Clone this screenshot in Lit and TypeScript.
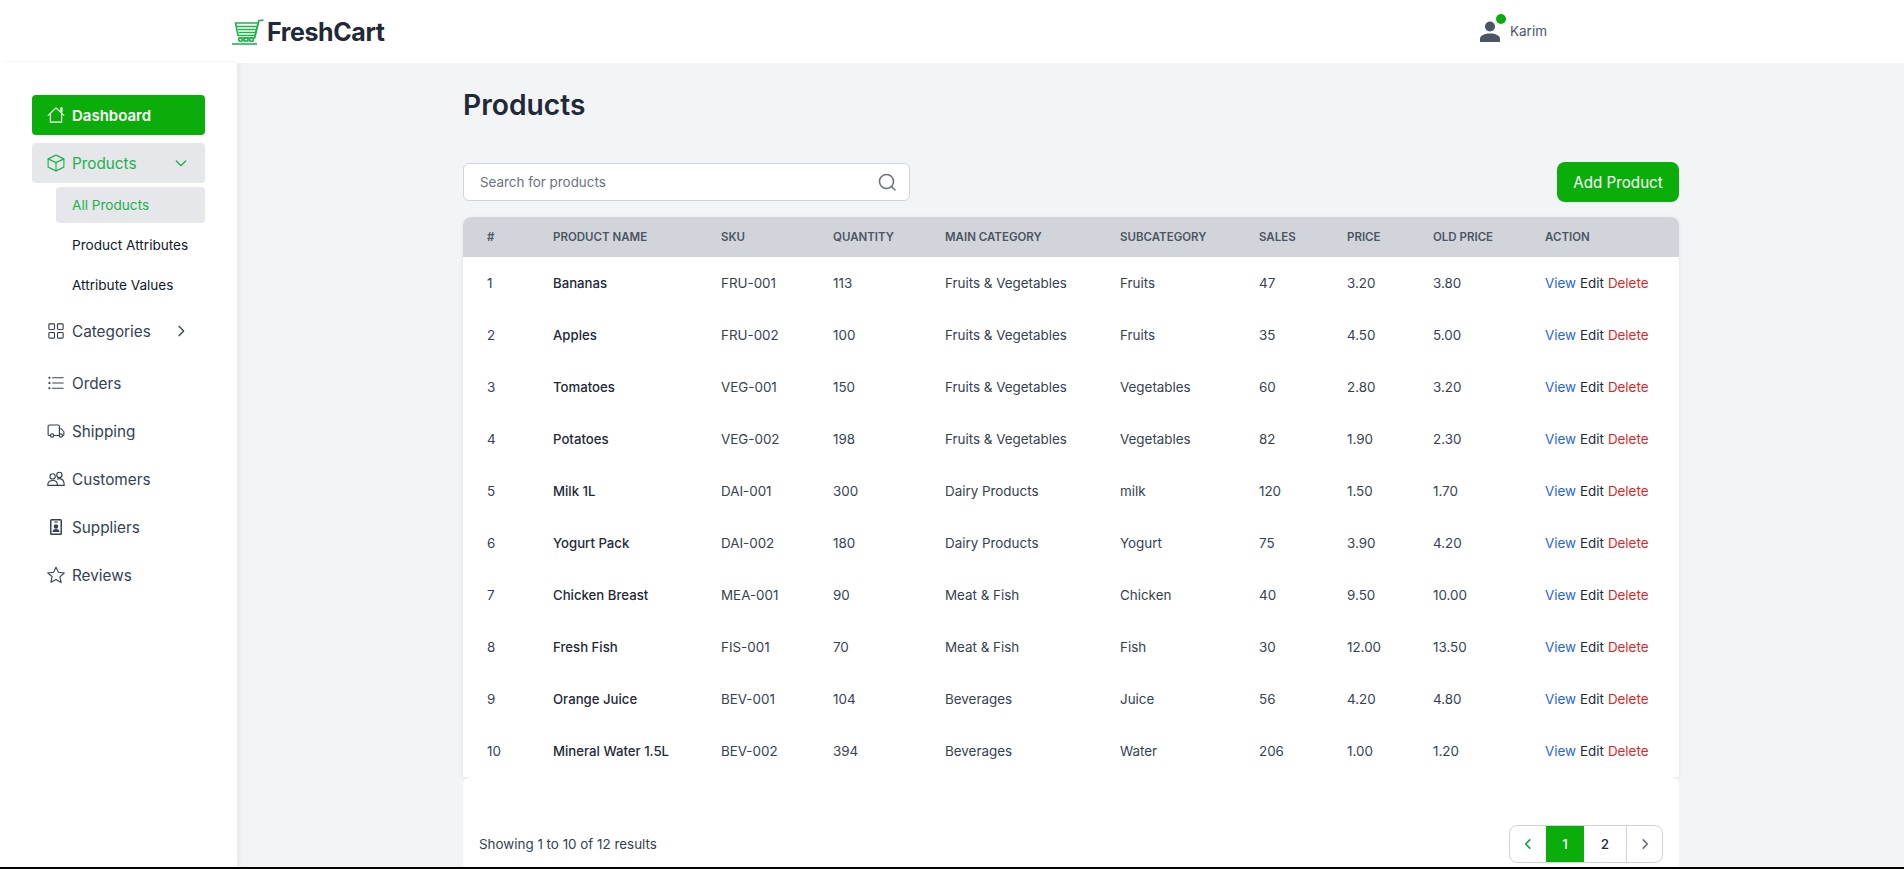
import { LitElement, html, css, svg } from 'lit';
import { customElement } from 'lit/decorators.js';

type Product = [string, string, number, string, string, number, string, string];

const PRODUCTS: Product[] = [
  ['Bananas', 'FRU-001', 113, 'Fruits & Vegetables', 'Fruits', 47, '3.20', '3.80'],
  ['Apples', 'FRU-002', 100, 'Fruits & Vegetables', 'Fruits', 35, '4.50', '5.00'],
  ['Tomatoes', 'VEG-001', 150, 'Fruits & Vegetables', 'Vegetables', 60, '2.80', '3.20'],
  ['Potatoes', 'VEG-002', 198, 'Fruits & Vegetables', 'Vegetables', 82, '1.90', '2.30'],
  ['Milk 1L', 'DAI-001', 300, 'Dairy Products', 'milk', 120, '1.50', '1.70'],
  ['Yogurt Pack', 'DAI-002', 180, 'Dairy Products', 'Yogurt', 75, '3.90', '4.20'],
  ['Chicken Breast', 'MEA-001', 90, 'Meat & Fish', 'Chicken', 40, '9.50', '10.00'],
  ['Fresh Fish', 'FIS-001', 70, 'Meat & Fish', 'Fish', 30, '12.00', '13.50'],
  ['Orange Juice', 'BEV-001', 104, 'Beverages', 'Juice', 56, '4.20', '4.80'],
  ['Mineral Water 1.5L', 'BEV-002', 394, 'Beverages', 'Water', 206, '1.00', '1.20'],
];

const COLUMNS: [string, number][] = [
  ['#', 66],
  ['Product name', 168],
  ['SKU', 112],
  ['Quantity', 112],
  ['Main category', 175],
  ['Subcategory', 139],
  ['Sales', 88],
  ['Price', 86],
  ['Old price', 112],
  ['Action', 158],
];

const icon = (paths: unknown, size = 18) => html`<svg
  width=${size}
  height=${size}
  viewBox="0 0 24 24"
  fill="none"
  stroke="currentColor"
  stroke-width="1.5"
  stroke-linecap="round"
  stroke-linejoin="round"
>
  ${paths}
</svg>`;

const ICONS = {
  home: svg`<path d="M1.500 12.500 12 2.500l10.500 10" /><path d="M4.500 10v11.500h15V10" /><path d="M18.500 7V2.500h1.500V8" />`,
  cube: svg`<path d="M12 1.500 22.500 6.500v11L12 22.500 1.500 17.500v-11z" /><path d="M1.500 6.500 12 11.500l10.500-5" /><path d="M12 11.500v11" />`,
  grid: svg`<rect x="2.500" y="2.500" width="7.500" height="7.500" rx="1.200" /><rect x="14" y="2.500" width="7.500" height="7.500" rx="1.200" /><rect x="2.500" y="14" width="7.500" height="7.500" rx="1.200" /><rect x="14" y="14" width="7.500" height="7.500" rx="1.200" />`,
  list: svg`<path d="M7.500 5h14M7.500 12h14M7.500 19h14" /><path d="M3 5h.5M3 12h.5M3 19h.5" stroke-width="2.400" />`,
  truck: svg`<path d="M4.500 18H3a1.500 1.500 0 0 1-1.500-1.500v-11A1.500 1.500 0 0 1 3 4h12a1.500 1.500 0 0 1 1.500 1.500V18H9" /><path d="M16.500 9H19l3.500 4v3.500A1.500 1.500 0 0 1 21 18h-.5" /><circle cx="6.800" cy="18" r="2.200" /><circle cx="18.500" cy="18" r="2.200" />`,
  users: svg`<circle cx="7.500" cy="8.500" r="3.500" /><circle cx="16.500" cy="6.500" r="3.500" /><path d="M1 20.500c0-4 2.500-6.500 6.500-6.500s6.500 2.500 6.500 6.500z" /><path d="M14 12c.8-.3 1.600-.5 2.500-.5 4 0 6.500 3 6.500 9h-9" />`,
  star: svg`<path d="m12 1.500 3.200 6.900 7.800.9-5.800 5.300 1.600 7.500L12 18l-6.800 3.600 1.600-7.500L1 9.300l7.800-.9z" />`,
};

@customElement('app-root')
export class AppRoot extends LitElement {
  static override styles = css`
    :host {
      display: block;
      font-family: 'Inter', 'Liberation Sans', sans-serif;
      color: #1f2937;
    }
    .shell {
      height: 100vh;
      box-sizing: border-box;
      border-bottom: 2px solid #000;
      overflow: hidden;
      display: flex;
      flex-direction: column;
      background: #fff;
    }
    .topbar {
      flex: none;
      height: 63px;
      display: flex;
      align-items: center;
      padding: 0 357px 0 232px;
      background: #fff;
    }
    .logo {
      display: flex;
      align-items: center;
      gap: 3px;
      font-size: 25px;
      font-weight: 700;
      letter-spacing: -0.4px;
      color: #1f2937;
    }
    .user {
      margin-left: auto;
      margin-bottom: 2px;
      display: flex;
      align-items: center;
      gap: 10px;
      font-size: 13.5px;
      color: #4b5563;
    }
    .avatar {
      position: relative;
      width: 20px;
      height: 21px;
      margin-top: 2px;
      color: #4b5563;
    }
    .avatar svg {
      display: block;
    }
    .avatar-dot {
      position: absolute;
      top: -7px;
      right: -6px;
      width: 10px;
      height: 10px;
      border-radius: 50%;
      background: #0bad0b;
    }
    .body {
      flex: 1;
      min-height: 0;
      display: flex;
    }
    .sidebar {
      flex: none;
      width: 237px;
      box-sizing: border-box;
      padding: 32px 32px 0;
      background: #fff;
      box-shadow: 2px 0 6px rgba(0, 0, 0, 0.06);
      position: relative;
      display: flex;
      flex-direction: column;
    }
    .nav-item {
      height: 40px;
      margin-bottom: 8px;
      width: 173px;
      box-sizing: border-box;
      padding: 0 16px;
      display: flex;
      align-items: center;
      gap: 7px;
      border-radius: 4px;
      font-size: 15.3px;
      color: #374151;
    }
    .nav-item > svg {
      flex: none;
      margin-left: -1px;
    }
    .nav-item .chev {
      display: flex;
      margin-left: auto;
    }
    .nav-item.primary {
      background: #0bad0b;
      color: #fff;
      font-weight: 600;
      font-size: 15px;
    }
    .nav-item.open {
      background: #e5e7eb;
      color: #22b14c;
      margin-bottom: 4px;
    }
    .sub {
      margin-left: 24px;
      width: 149px;
      display: flex;
      flex-direction: column;
      gap: 4px;
      margin-bottom: 8px;
    }
    .sub-item {
      height: 36px;
      box-sizing: border-box;
      padding-left: 16px;
      display: flex;
      align-items: center;
      border-radius: 4px;
      font-size: 13.6px;
      color: #111827;
    }
    .sub-item.active {
      background: #e5e7eb;
      color: #22b14c;
    }
    .nav-item.gap-lg {
      margin-bottom: 12px;
    }
    .main {
      flex: 1;
      min-width: 0;
      padding-left: 1px;
      background: #f3f4f6;
    }
    .content {
      width: 1216px;
      margin: 0 auto;
      padding-top: 23px;
    }
    h1 {
      margin: 0;
      font-size: 28.2px;
      line-height: 38px;
      font-weight: 600;
      color: #1f2937;
    }
    .toolbar {
      margin-top: 38px;
      height: 40px;
      display: flex;
      align-items: center;
      justify-content: space-between;
    }
    .search {
      width: 447px;
      height: 38px;
      box-sizing: border-box;
      padding: 0 12px 0 16px;
      display: flex;
      align-items: center;
      justify-content: space-between;
      background: #fff;
      border: 1px solid #d1d5db;
      border-radius: 6px;
      font-size: 13.4px;
      color: #6b7280;
    }
    .add {
      width: 122px;
      height: 40px;
      display: flex;
      align-items: center;
      justify-content: center;
      background: #0bad0b;
      border-radius: 8px;
      color: #fff;
      font-size: 15.2px;
    }
    .table-wrap {
      margin-top: 15px;
      border-radius: 8px 8px 0 0;
      overflow: hidden;
      box-shadow: 0 1px 4px rgba(0, 0, 0, 0.08);
    }
    table {
      width: 100%;
      table-layout: fixed;
      border-collapse: collapse;
      background: #fff;
    }
    th {
      height: 40px;
      padding: 0 0 0 24px;
      background: #d1d5db;
      text-align: left;
      font-size: 11.5px;
      font-weight: 600;
      text-transform: uppercase;
      color: #4b5563;
    }
    td {
      height: 52px;
      padding: 0 0 0 24px;
      font-size: 13.4px;
      color: #374151;
      white-space: nowrap;
    }
    td.name {
      font-size: 13.2px;
      font-weight: 500;
      color: #1f2937;
    }
    .actions {
      display: flex;
      gap: 4px;
    }
    .view {
      color: #2563eb;
    }
    .edit {
      color: #1f2937;
    }
    .delete {
      color: #dc2626;
    }
    .footer {
      height: 200px;
      box-sizing: border-box;
      padding: 48px 16px 0;
      background: #fff;
      border-radius: 8px 8px 0 0;
      display: flex;
      align-items: flex-start;
      justify-content: space-between;
      font-size: 13.4px;
      color: #374151;
    }
    .showing {
      line-height: 38px;
    }
    .pager {
      display: flex;
      height: 38px;
      box-sizing: border-box;
      border: 1px solid #d1d5db;
      border-radius: 8px;
      overflow: hidden;
    }
    .pager div {
      display: flex;
      align-items: center;
      justify-content: center;
      box-sizing: border-box;
      font-size: 13.5px;
      font-weight: 500;
      color: #1f2937;
    }
    .pager .prev {
      width: 36px;
      color: #16a34a;
    }
    .pager .current {
      width: 38px;
      background: #0bad0b;
      color: #fff;
    }
    .pager .page {
      width: 42px;
    }
    .pager .next {
      width: 36px;
      border-left: 1px solid #d1d5db;
      color: #6b7280;
    }
  `;

  private logo() {
    return html`<svg width="32" height="26" viewBox="0 0 32 26" fill="none" stroke="#22b14c" stroke-width="1.600">
      <path d="M31.500 1 26.800 1.800 22.700 19H6.500" />
      <path d="M3.500 4h22.500l-3 12.500H6z" />
      <path d="M5 7.500h19.500M5.800 10.500h18M6.500 13.500h16.500" />
      <circle cx="8.500" cy="20.500" r="1.800" />
      <circle cx="19.500" cy="20.500" r="1.800" />
      <rect x="12" y="19" width="4" height="3" />
      <path d="M0 25h25" />
    </svg>`;
  }

  override render() {
    return html`<div class="shell">
      <header class="topbar">
        <div class="logo">${this.logo()}<span>FreshCart</span></div>
        <div class="user">
          <div class="avatar">
            <svg width="20" height="21" viewBox="0 0 20 21" fill="currentColor">
              <circle cx="10" cy="5.500" r="5" />
              <path d="M0 21v-3.500C0 14.500 5 12.500 10 12.500s10 2 10 5V21z" />
            </svg>
            <span class="avatar-dot"></span>
          </div>
          <span>Karim</span>
        </div>
      </header>
      <div class="body">
        <aside class="sidebar">
          <div class="nav-item primary">${icon(ICONS.home)}Dashboard</div>
          <div class="nav-item open">
            ${icon(ICONS.cube)}Products
            <span class="chev">${icon(svg`<path d="m5 9 7 7 7-7" stroke-width="2" />`, 16)}</span>
          </div>
          <div class="sub">
            <div class="sub-item active">All Products</div>
            <div class="sub-item">Product Attributes</div>
            <div class="sub-item">Attribute Values</div>
          </div>
          <div class="nav-item gap-lg">
            ${icon(ICONS.grid)}Categories
            <span class="chev">${icon(svg`<path d="m9 5 7 7-7 7" stroke-width="2" />`, 16)}</span>
          </div>
          <div class="nav-item">${icon(ICONS.list)}Orders</div>
          <div class="nav-item">${icon(ICONS.truck)}Shipping</div>
          <div class="nav-item">${icon(ICONS.users)}Customers</div>
          <div class="nav-item">
            <svg width="18" height="18" viewBox="0 0 18 18" fill="currentColor">
              <path
                fill-rule="evenodd"
                d="M4.500 1h9A1.500 1.500 0 0 1 15 2.500v13a1.500 1.500 0 0 1-1.500 1.500h-9A1.500 1.500 0 0 1 3 15.500v-13A1.500 1.500 0 0 1 4.500 1zm0 1.500v13h9v-13z"
              />
              <path d="M7 3.500h4v1H7z" />
              <circle cx="9" cy="8.500" r="2.200" />
              <path d="M5.500 14c0-2 1.500-3 3.500-3s3.500 1 3.500 3z" />
            </svg>
            Suppliers
          </div>
          <div class="nav-item">${icon(ICONS.star)}Reviews</div>
        </aside>
        <main class="main">
          <div class="content">
            <h1>Products</h1>
            <div class="toolbar">
              <div class="search">
                <span>Search for products</span>
                <svg width="20" height="20" viewBox="0 0 20 20" fill="none" stroke="#6b7280" stroke-width="1.600" stroke-linecap="round">
                  <circle cx="9.500" cy="9.500" r="7" />
                  <path d="m14.500 14.500 3.500 3.500" />
                </svg>
              </div>
              <div class="add">Add Product</div>
            </div>
            <div class="table-wrap">
              <table>
                <colgroup>
                  ${COLUMNS.map(([, w]) => html`<col style="width:${w}px" />`)}
                </colgroup>
                <thead>
                  <tr>${COLUMNS.map(([label]) => html`<th>${label}</th>`)}</tr>
                </thead>
                <tbody>
                  ${PRODUCTS.map(
                    (p, i) => html`<tr>
                      <td>${i + 1}</td>
                      <td class="name">${p[0]}</td>
                      <td>${p[1]}</td>
                      <td>${p[2]}</td>
                      <td>${p[3]}</td>
                      <td>${p[4]}</td>
                      <td>${p[5]}</td>
                      <td>${p[6]}</td>
                      <td>${p[7]}</td>
                      <td>
                        <div class="actions">
                          <span class="view">View</span><span class="edit">Edit</span><span class="delete">Delete</span>
                        </div>
                      </td>
                    </tr>`,
                  )}
                </tbody>
              </table>
            </div>
            <div class="footer">
              <span class="showing">Showing 1 to 10 of 12 results</span>
              <div class="pager">
                <div class="prev">${icon(svg`<path d="m15 5-7 7 7 7" stroke-width="3" />`, 14)}</div>
                <div class="current">1</div>
                <div class="page">2</div>
                <div class="next">${icon(svg`<path d="m9 5 7 7-7 7" stroke-width="3" />`, 14)}</div>
              </div>
            </div>
          </div>
        </main>
      </div>
    </div>`;
  }
}
